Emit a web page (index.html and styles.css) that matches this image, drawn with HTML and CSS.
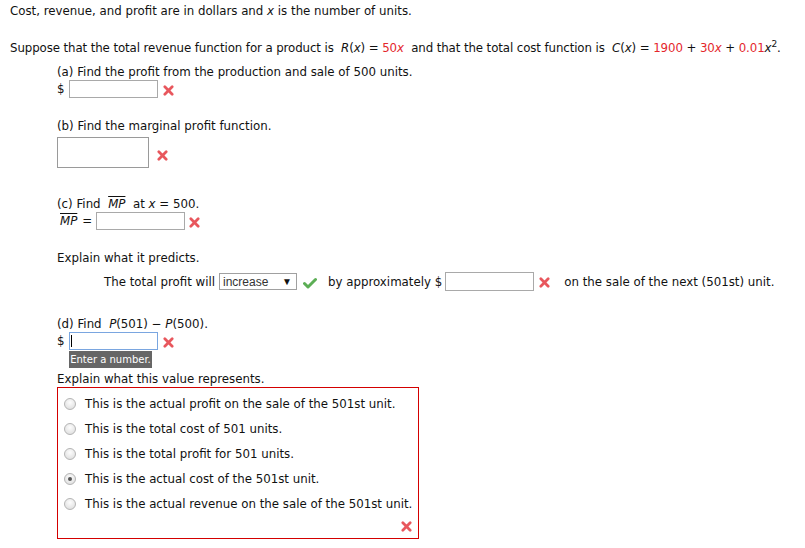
FILE: index.html
```html
<!DOCTYPE html>
<html>
<head>
<meta charset="utf-8">
<link rel="stylesheet" href="styles.css">
</head>
<body>
<svg width="0" height="0" class="defs">
  <defs>
    <symbol id="xmark" viewBox="0 0 12 12">
      <path d="M2 2 L10 10 M10 2 L2 10" stroke="#e8575d" stroke-width="3" stroke-linecap="round" fill="none"/>
    </symbol>
    <symbol id="check" viewBox="0 0 14 12">
      <path d="M1.5 6.5 L5 10 L12.5 2.5" stroke="#5cae55" stroke-width="3" stroke-linecap="round" stroke-linejoin="round" fill="none"/>
    </symbol>
  </defs>
</svg>
<div class="page">
  <div class="intro">Cost, revenue, and profit are in dollars and <i>x</i> is the number of units.</div>
  <div class="setup">Suppose that the total revenue function for a product is&nbsp; <i>R</i>(<i>x</i>) = <span class="red">50<i>x</i></span>&nbsp; and that the total cost function is&nbsp; <i>C</i>(<i>x</i>) = <span class="red">1900</span> + <span class="red">30<i>x</i></span> + <span class="red">0.01</span><i>x</i><sup>2</sup>.</div>

  <div class="parts">
    <div class="title t-a">(a) Find the profit from the production and sale of 500 units.</div>
    <div class="row">
      <span class="dollar">$</span>
      <span class="box w88"></span>
      <svg class="x x-a"><use href="#xmark"/></svg>
    </div>

    <div class="title t-b">(b) Find the marginal profit function.</div>
    <div class="row row-b">
      <span class="box big"></span>
      <svg class="x x-b"><use href="#xmark"/></svg>
    </div>

    <div class="title t-c">(c) Find&nbsp; <span class="ov"><i>MP</i></span>&nbsp; at <i>x</i> = 500.</div>
    <div class="row">
      <span class="ov mp"><i>MP</i></span><span class="eq">=</span>
      <span class="box w88"></span>
      <svg class="x x-c"><use href="#xmark"/></svg>
    </div>

    <div class="title t-e">Explain what it predicts.</div>
    <div class="row row-p">
      <span>The total profit will</span>
      <span class="select"><span class="sel-text">increase</span><span class="arrow">&#9660;</span></span>
      <svg class="ck"><use href="#check"/></svg>
      <span class="by">by approximately $</span>
      <span class="box w88 tall"></span>
      <svg class="x x-p"><use href="#xmark"/></svg>
      <span class="tail">on the sale of the next (501st) unit.</span>
    </div>

    <div class="title t-d">(d) Find&nbsp; <i>P</i>(501) &minus; <i>P</i>(500).</div>
    <div class="row row-d">
      <span class="dollar">$</span>
      <span class="box w88 focus"><span class="caret"></span></span>
      <svg class="x x-a"><use href="#xmark"/></svg>
      <span class="tip">Enter a number.</span>
    </div>

    <div class="title t-f">Explain what this value represents.</div>
    <div class="choices">
      <div class="opt"><span class="radio"></span>This is the actual profit on the sale of the 501st unit.</div>
      <div class="opt"><span class="radio"></span>This is the total cost of 501 units.</div>
      <div class="opt"><span class="radio"></span>This is the total profit for 501 units.</div>
      <div class="opt"><span class="radio on"></span>This is the actual cost of the 501st unit.</div>
      <div class="opt"><span class="radio"></span>This is the actual revenue on the sale of the 501st unit.</div>
      <div class="choice-x"><svg class="x"><use href="#xmark"/></svg></div>
    </div>
  </div>
</div>
</body>
</html>
```

FILE: styles.css
```css
html, body {
  margin: 0;
  padding: 0;
  background: #fff;
}
.defs {
  position: absolute;
  width: 0;
  height: 0;
}
.page {
  font-family: "DejaVu Sans", Verdana, sans-serif;
  font-size: 11.8px;
  color: #111;
  padding-left: 10px;
}
.intro {
  height: 22px;
  line-height: 22px;
}
.setup {
  margin-top: 15px;
  height: 22px;
  line-height: 22px;
  white-space: nowrap;
  letter-spacing: -0.1px;
}
.red { color: #e4262b; }
sup {
  font-size: 9px;
  line-height: 0;
  vertical-align: 5px;
}
.parts {
  padding-left: 47px;
}
.title {
  box-sizing: border-box;
  height: 18px;
  padding-top: 1px;
  line-height: 18px;
  white-space: nowrap;
}
.t-a { margin-top: 3px; }
.t-b { margin-top: 18px; }
.t-c { margin-top: 26px; }
.t-e { margin-top: 18px; }
.t-d { margin-top: 24px; height: 17px; padding-top: 2px; line-height: 15px; }
.t-f { margin-top: 21px; height: 16px; padding-top: 0; line-height: 16px; }
.row {
  display: flex;
  align-items: center;
  height: 18px;
  position: relative;
  white-space: nowrap;
}
.dollar {
  width: 12px;
}
.box {
  display: block;
  box-sizing: border-box;
  height: 18px;
  border: 1px solid #a9a9a9;
  background: #fff;
}
.w88 { width: 89px; }
.tall { height: 19px; }
.big {
  width: 92px;
  height: 31px;
  border-color: #9a9a9a;
}
.row-b {
  height: 31px;
  margin-top: 3px;
}
.x {
  width: 11px;
  height: 11px;
}
.x-a { margin-left: 5px; margin-top: 2px; }
.x-b { margin-left: 8px; margin-top: 6px; }
.x-c { margin-left: 4px; margin-top: 2px; }
.x-p { margin-left: 5px; margin-top: 2px; }
.ov {
  text-decoration: overline;
}
.mp { margin-left: 3px; }
.eq { margin-left: 5px; margin-right: 4px; }
.row-p {
  margin-top: 6px;
  height: 19px;
  padding-left: 47px;
}
.select {
  display: flex;
  align-items: center;
  box-sizing: border-box;
  width: 78px;
  height: 17px;
  margin-left: 4px;
  border: 1px solid #a0a0a0;
  font-family: "Liberation Sans", Arial, sans-serif;
  font-size: 12px;
  color: #333;
  padding-left: 3px;
}
.sel-text { flex: 1; }
.arrow {
  font-size: 10px;
  color: #111;
  margin-right: 4px;
}
.ck {
  width: 14px;
  height: 12px;
  margin-left: 6px;
  margin-top: 3px;
}
.by { margin-left: 11px; margin-right: 3px; }
.tail { margin-left: 14px; }
.row-d { margin-top: 0; }
.focus {
  border-color: #7aa6e0;
  position: relative;
}
.caret {
  position: absolute;
  left: 1px;
  top: 2px;
  width: 1px;
  height: 12px;
  background: #000;
}
.tip {
  position: absolute;
  left: 12px;
  top: 19px;
  width: 83px;
  height: 17px;
  line-height: 17px;
  background: #666;
  color: #fff;
  font-size: 10px;
  text-align: center;
}
.choices {
  box-sizing: border-box;
  width: 362px;
  height: 152px;
  border: 1px solid #d40000;
  padding-top: 3px;
}
.opt {
  display: flex;
  align-items: center;
  height: 25px;
  white-space: nowrap;
}
.radio {
  box-sizing: border-box;
  width: 12px;
  height: 12px;
  border-radius: 50%;
  border: 1px solid #b4b4b4;
  background: radial-gradient(circle at 50% 35%, #fdfdfd 0%, #e4e4e4 70%, #d6d6d6 100%);
  margin-left: 6px;
  margin-right: 9px;
  position: relative;
}
.radio.on::after {
  content: "";
  position: absolute;
  left: 3px;
  top: 3px;
  width: 4px;
  height: 4px;
  border-radius: 50%;
  background: #555;
}
.choice-x {
  display: flex;
  justify-content: flex-end;
  padding-right: 6px;
  margin-top: 5px;
}
```
